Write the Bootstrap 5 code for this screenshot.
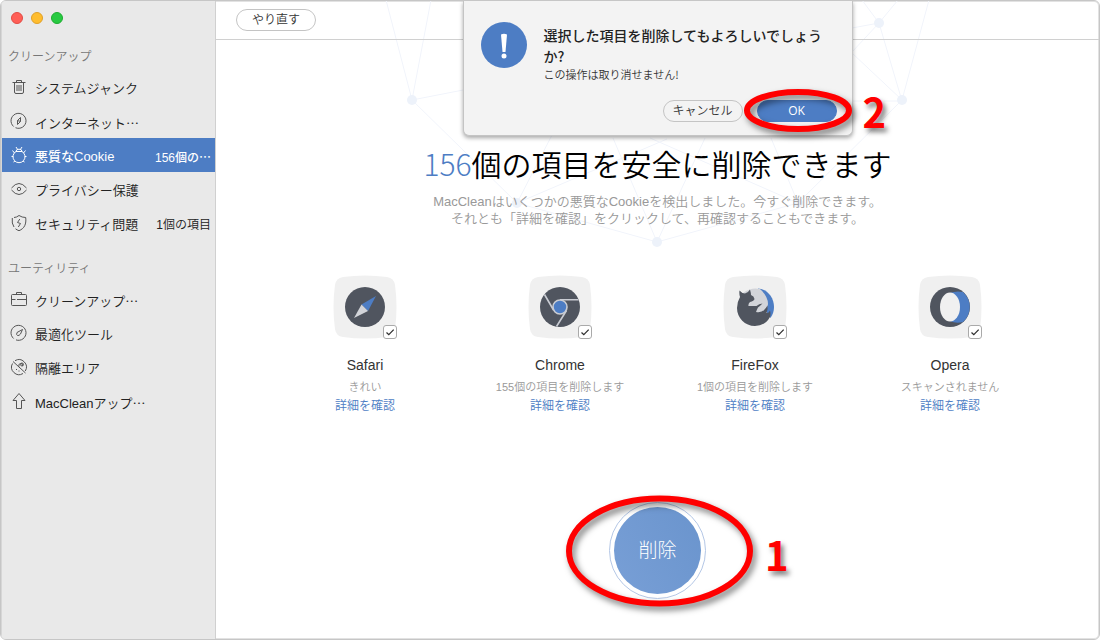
<!DOCTYPE html>
<html lang="ja">
<head>
<meta charset="utf-8">
<meta name="viewport" content="width=device-width, initial-scale=1">
<title>MacClean</title>
<link href="https://cdn.jsdelivr.net/npm/bootstrap@5.3.0/dist/css/bootstrap.min.css" rel="stylesheet">
<style>
  :root { --accent: #4d7dc4; --line: #d0d0d0; }
  body { font-family: "Liberation Sans", "Noto Sans CJK JP", sans-serif; font-size: 13px; color: #222; background: #fff; font-weight: 350; }
  .cjk { font-family: "Noto Sans CJK JP", sans-serif; }
  .window { min-height: 100vh; border: 1px solid #c6c6c6; border-radius: 6px; box-shadow: inset 0 0 0 1px #e2e2e2; overflow: hidden; }
  .side { width: 215px; background: #e9e9e9; border-right: 1px solid var(--line); border-left: 1px solid #d6d6d6; }
  .lights { height: 39px; padding: 11px 0 0 9px; gap: 8px; }
  .light-dot { width: 12px; height: 12px; border-radius: 50%; border: 1px solid; }
  .side-title { font-size: 12px; line-height: 26px; color: #777; margin: 0; padding: 4px 0 0 6px; font-weight: 350; }
  .side-list + .side-title { margin-top: 12px; }
  .side-link { height: 34px; padding: 4px 4px 0 8px; color: #222; text-decoration: none; }
  .side-link svg { width: 18px; height: 18px; margin-right: 7px; margin-top: -4px; fill: none; stroke: #555; stroke-width: 1; flex: none; }
  .side-link.active { background: var(--accent); color: #fff; font-weight: 500; }
  .side-link.active svg { stroke: #fff; }
  .side-count { font-size: 12px; }
  .topbar { height: 39px; border-bottom: 1px solid var(--line); padding-left: 20px; }
  .pill { width: 80px; height: 22px; border: 1px solid #c4c4c4; border-radius: 11px; background: transparent; color: #333; font-size: 12px; font-weight: 350; line-height: 18px; padding: 0; }
  .pill-ok { background: var(--accent); border-color: var(--accent); color: #fff; font-family: "Open Sans", sans-serif; font-weight: 400; }
  .mesh { left: 50%; top: 0; width: 560px; height: 260px; margin-left: -281px; stroke: #f1f4fb; fill: #edf2fa; stroke-width: 1; }
  .headline { font-size: 30px; line-height: 40px; font-weight: 350; color: #000; margin: 103px 0 10px; }
  .headline span { color: var(--accent); font-weight: 300; }
  .lead-text { line-height: 17px; color: #999; margin: 0 0 48px; }
  .apps { width: 780px; max-width: 100%; }
  .tile { width: 64px; height: 64px; }
  .tile > svg { width: 64px; height: 64px; display: block; }
  .tile input { appearance: none; right: 0; bottom: 0; width: 14px; height: 14px; margin: 0; border: 1px solid #aaa; border-radius: 3px; background: #fff; }
  .tile input:checked { background: #fff url("data:image/svg+xml,%3Csvg xmlns='http://www.w3.org/2000/svg' viewBox='0 0 12 12'%3E%3Cpath d='M2.5 6.5l2.3 2.2L9.7 3.6' fill='none' stroke='%23333' stroke-width='1.3'/%3E%3C/svg%3E"); }
  .app-name { font-size: 14px; line-height: 20px; color: #333; margin: 16px 0 4px; display: block; }
  .app-note { font-size: 11px; line-height: 16px; color: #999; margin: 0; }
  .app-link { font-size: 12px; line-height: 22px; color: var(--accent); text-decoration: none; display: block; }
  .ring { width: 97px; height: 97px; border: 1px solid #b4c7e6; border-radius: 50%; margin-top: 85px; padding: 4px; }
  .wipe { width: 100%; height: 100%; border: 0; border-radius: 50%; background: linear-gradient(60deg, #789fd6, #6a94cd); color: #fff; font-size: 19px; font-weight: 300; padding: 2px 0 0; }
  .sheet { left: 50%; top: 0; width: 390px; margin-left: -195px; padding: 21px 15px 13px 17px; background: #f3f3f3; border: 1px solid #c4c4c4; border-top: 0; border-radius: 0 0 6px 6px; box-shadow: 0 2px 4px rgba(0,0,0,.35); }
  .sheet-icon { width: 46px; height: 46px; flex: none; margin-right: 17px; }
  .sheet-title { font-size: 14px; line-height: 21px; font-weight: 500; margin: 3px 0 0; width: 282px; }
  .sheet-note { font-size: 11px; line-height: 14px; color: #333; margin: 0 0 19px; }
  .sheet-actions { gap: 14px; }
  .mark-oval { fill: none; stroke: #f00; stroke-width: 6; filter: drop-shadow(3px 4px 3px rgba(0,0,0,.5)); pointer-events: none; overflow: visible; }
  .oval-ok { left: -13px; top: -11px; width: 108px; height: 43px; }
  .oval-wipe { left: -44px; top: -8px; width: 187px; height: 112px; }
  .step { font: bold 40px/40px "Noto Sans CJK JP", sans-serif; color: #f00; -webkit-text-stroke: 4px #fff; paint-order: stroke fill; text-shadow: 3px 4px 5px rgba(0,0,0,.5); }
  .step-ok { left: 106px; top: -9px; }
  .step-wipe { left: 155px; top: 31px; }
</style>
</head>
<body>
<div class="window d-flex">
  <nav class="side flex-shrink-0">
    <div class="lights d-flex">
      <span class="light-dot" style="background:#ff5f57;border-color:#e24b44"></span>
      <span class="light-dot" style="background:#ffbd2e;border-color:#e0a028"></span>
      <span class="light-dot" style="background:#28ca42;border-color:#1eac30"></span>
    </div>
    <h2 class="side-title">クリーンアップ</h2>
    <div class="side-list">
      <a href="#" class="side-link d-flex align-items-center"><svg viewBox="0 0 18 18"><path d="M2.500 4.500h13M6.500 4.500v-2h5v2M4.500 4.500v9.500q0 1.500 1.500 1.500h6q1.500 0 1.500-1.500V4.500M7 7v6M9 7v6M11 7v6"/></svg>システムジャンク</a>
      <a href="#" class="side-link d-flex align-items-center"><svg viewBox="0 0 18 18"><path d="M3.600 14.500A7.500 7.500 0 1 1 5.500 15.700M7.500 12.500V8.500l3-3v4zM7.500 8.500l3 1"/></svg><span>インターネット<span class="cjk">…</span></span></a>
      <a href="#" class="side-link active d-flex align-items-center"><svg viewBox="0 0 18 18"><path d="M6 5.500a6 6 0 1 0 6 0zM6 5.500Q6 3.200 9 3.200t3 2.300M6 1l1.500 2.300M12 1l-1.500 2.300M2.500 4.500l2 2.500M15.500 4.500l-2 2.500M1.500 10.500h1.500M15 10.500h1.500M3.500 16l1.500-1M14.500 16l-1.500-1"/></svg>悪質なCookie<span class="side-count ms-auto">156個の<span class="cjk">…</span></span></a>
      <a href="#" class="side-link d-flex align-items-center"><svg viewBox="0 0 18 18"><path d="M1.500 8Q9-1 16.500 8M1.500 10Q9 19 16.500 10"/><circle cx="9" cy="9" r="1.700"/></svg>プライバシー保護</a>
      <a href="#" class="side-link d-flex align-items-center"><svg viewBox="0 0 18 18"><path d="M4 3.500Q6.500 3.500 9 1.500Q12 3.500 15.700 3.500C16.500 10 14.500 14.500 9 16.700Q7 16 5.500 14.800M4 13Q1.500 9.500 2.300 4M9.800 5L7.500 8.500l3 1L8.300 13"/></svg>セキュリティ問題<span class="side-count ms-auto">1個の項目</span></a>
    </div>
    <h2 class="side-title">ユーティリティ</h2>
    <div class="side-list">
      <a href="#" class="side-link d-flex align-items-center"><svg viewBox="0 0 18 18"><rect x="1.500" y="4.500" width="15" height="11" rx="1"/><path d="M6.500 4.500v-2h5v2M1.500 9.500h4M7 9.500h9.500"/></svg><span>クリーンアップ<span class="cjk">…</span></span></a>
      <a href="#" class="side-link d-flex align-items-center"><svg viewBox="0 0 18 18"><path d="M3.600 14.500A7.500 7.500 0 1 1 6 15.900M12.500 5.500L7 8.500Q6 11 7.500 11.500T10.500 10z"/></svg>最適化ツール</a>
      <a href="#" class="side-link d-flex align-items-center"><svg viewBox="0 0 18 18"><path d="M2.500 5.500A7.500 7.500 0 0 0 13 15.500M5 2.700A7.500 7.500 0 0 1 15.300 13M3 3.500l12.500 11.500M6 11.500h1M8.500 13h1M9 8.500Q8 6 10.500 5.500T12.500 8"/><circle cx="12" cy="6.500" r="1.500"/></svg>隔離エリア</a>
      <a href="#" class="side-link d-flex align-items-center"><svg viewBox="0 0 18 18"><path d="M9 1.500L15 8.500H11.500V16.500H6.500V8.500H3z" stroke-linejoin="round"/></svg><span>MacCleanアップ<span class="cjk">…</span></span></a>
    </div>
  </nav>

  <main class="flex-grow-1 position-relative d-flex flex-column">
    <svg class="mesh position-absolute" viewBox="377 1 560 260" aria-hidden="true">
      <path fill="none" d="M386 0L412 100L431 0M412 100L540 75M412 100L517 203L657 242L798 203L902 100L852 53M517 203L552 135M517 203L667 139M657 242L613 138M657 242L705 138M798 203L771 138M798 203L650 138M852 101H902L879 23L862 0M902 100L929 0M879 23L898 0M879 23L852 28M879 23L852 52"/>
      <g stroke="none"><circle cx="412" cy="100" r="5"/><circle cx="517" cy="203" r="5"/><circle cx="657" cy="242" r="5"/><circle cx="798" cy="203" r="5"/><circle cx="902" cy="100" r="5"/><circle cx="879" cy="23" r="5"/></g>
    </svg>
    <header class="topbar d-flex align-items-center position-relative"><button type="button" class="pill">やり直す</button></header>

    <section class="d-flex flex-column align-items-center text-center position-relative">
      <h1 class="headline cjk"><span>156</span>個の項目を安全に削除できます</h1>
      <p class="lead-text">MacCleanはいくつかの悪質なCookieを検出しました。今すぐ削除できます。<br>それとも「詳細を確認」をクリックして、再確認することもできます。</p>
      <div class="apps row g-0">
        <div class="col-3">
          <div class="tile position-relative mx-auto">
            <svg viewBox="0 0 64 64"><path fill="#f0f0f0" d="M10 2Q32-1 54 2Q61 3 62 10Q65 32 62 54Q61 61 54 62Q32 65 10 62Q3 61 2 54Q-1 32 2 10Q3 3 10 2z"/><circle cx="32" cy="32" r="20" fill="#50555f"/><path fill="#4d7dc4" d="M43 21L28.500 29.500L35 36z"/><path fill="#d2d4d9" d="M21 43L28.500 29.500L35 36z"/></svg>
            <input type="checkbox" id="safari" class="position-absolute" checked>
          </div>
          <label class="app-name" for="safari">Safari</label>
          <p class="app-note">きれい</p>
          <a href="#" class="app-link">詳細を確認</a>
        </div>
        <div class="col-3">
          <div class="tile position-relative mx-auto">
            <svg viewBox="0 0 64 64"><path fill="#f0f0f0" d="M10 2Q32-1 54 2Q61 3 62 10Q65 32 62 54Q61 61 54 62Q32 65 10 62Q3 61 2 54Q-1 32 2 10Q3 3 10 2z"/><circle cx="32" cy="32" r="20" fill="#50555f"/><g stroke="#c9ccd3" stroke-width="1.600"><path fill="none" d="M32 24.800H50.500M25.500 35L16.500 19.500M38.500 35.500L28.500 51.500"/><circle cx="32" cy="32" r="7" fill="#4d7dc4"/></g></svg>
            <input type="checkbox" id="chrome" class="position-absolute" checked>
          </div>
          <label class="app-name" for="chrome">Chrome</label>
          <p class="app-note">155個の項目を削除します</p>
          <a href="#" class="app-link">詳細を確認</a>
        </div>
        <div class="col-3">
          <div class="tile position-relative mx-auto">
            <svg viewBox="0 0 64 64"><path fill="#f0f0f0" d="M10 2Q32-1 54 2Q61 3 62 10Q65 32 62 54Q61 61 54 62Q32 65 10 62Q3 61 2 54Q-1 32 2 10Q3 3 10 2z"/><path fill="#4d7dc4" d="M35 13.500C44 14 51 22 51 32Q51 38 47.500 43L41 33z"/><path fill="#d2d4d9" d="M20 18Q28 12 37 14Q45 21 45 29Q44 36 41 38L27 39L24 28z"/><path fill="#50555f" d="M16.500 15.500Q19 18.500 22 18.500Q25 18 27 14.500Q28 18 28 20Q31 21 31.500 24Q31 26 27 27Q25 29 25.500 31H33.500Q36 28.500 39.500 28.500Q37 31 35 32.500Q34 34 33 37Q39 38 41.500 34.500Q43 33 44.500 30.500Q45 34 43.500 38Q46 38 47 35.500Q48 39 47 42Q42 51 32 51C22 51 14 43 14 33Q14 27 17 22Q16 19 16.500 15.500z"/></svg>
            <input type="checkbox" id="firefox" class="position-absolute" checked>
          </div>
          <label class="app-name" for="firefox">FireFox</label>
          <p class="app-note">1個の項目を削除します</p>
          <a href="#" class="app-link">詳細を確認</a>
        </div>
        <div class="col-3">
          <div class="tile position-relative mx-auto">
            <svg viewBox="0 0 64 64"><path fill="#f0f0f0" d="M10 2Q32-1 54 2Q61 3 62 10Q65 32 62 54Q61 61 54 62Q32 65 10 62Q3 61 2 54Q-1 32 2 10Q3 3 10 2z"/><circle cx="32" cy="32" r="20" fill="#50555f"/><path fill="#4d7dc4" d="M32 18Q38 15.500 45 17A20 20 0 0 1 45 47Q38 49 32 46z"/><ellipse cx="32" cy="32" rx="10" ry="14.500" fill="#f0f0f0"/></svg>
            <input type="checkbox" id="opera" class="position-absolute" checked>
          </div>
          <label class="app-name" for="opera">Opera</label>
          <p class="app-note">スキャンされません</p>
          <a href="#" class="app-link">詳細を確認</a>
        </div>
      </div>
      <div class="ring position-relative">
        <button type="button" class="wipe">削除</button>
        <svg class="mark-oval oval-wipe position-absolute" viewBox="0 0 187 112"><ellipse cx="93.500" cy="56" rx="90.500" ry="52.500"/></svg>
        <span class="step step-wipe position-absolute">1</span>
      </div>
    </section>

    <div class="sheet position-absolute" role="dialog" aria-labelledby="ask">
      <div class="d-flex">
        <svg class="sheet-icon" viewBox="0 0 46 46"><circle cx="23" cy="23" r="23" fill="#4d7dc4"/><path fill="#fff" d="M20 12.500Q23 11 26 12.500L24.500 30h-3z"/><circle cx="23" cy="34" r="2.500" fill="#fff"/></svg>
        <div class="cjk">
          <h2 class="sheet-title" id="ask">選択した項目を削除してもよろしいでしょうか?</h2>
          <p class="sheet-note">この操作は取り消せません!</p>
        </div>
      </div>
      <div class="sheet-actions d-flex justify-content-end">
        <button type="button" class="pill">キャンセル</button>
        <div class="position-relative d-flex">
          <button type="button" class="pill pill-ok">OK</button>
          <svg class="mark-oval oval-ok position-absolute" viewBox="0 0 108 43"><ellipse cx="54" cy="21.500" rx="51" ry="18.500"/></svg>
          <span class="step step-ok position-absolute">2</span>
        </div>
      </div>
    </div>
  </main>
</div>
<script src="https://cdn.jsdelivr.net/npm/bootstrap@5.3.0/dist/js/bootstrap.bundle.min.js"></script>
</body>
</html>
